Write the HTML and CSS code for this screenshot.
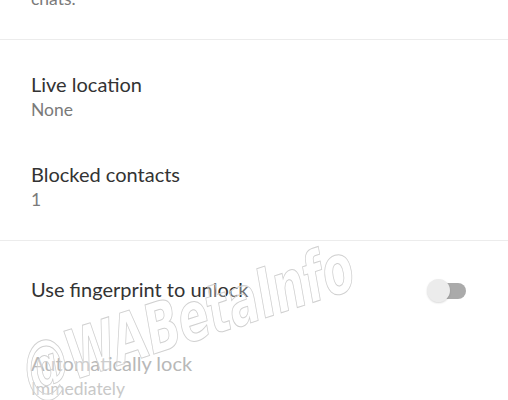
FILE: index.html
```html
<!DOCTYPE html>
<html lang="en">

<head>
    <meta charset="UTF-8">
    <meta name="viewport" content="width=device-width, initial-scale=1.0">
    <title>Privacy</title>
    <link rel="stylesheet" href="styles.css">
</head>

<body>
    <div class="intro">
        <p class="sub">chats.</p>
    </div>

    <div class="group">
        <div class="row">
            <div class="title">Live location</div>
            <div class="sub">None</div>
        </div>
        <div class="row">
            <div class="title">Blocked contacts</div>
            <div class="sub">1</div>
        </div>
    </div>

    <div class="group last">
        <div class="row single">
            <div class="title">Use fingerprint to unlock</div>
            <div class="toggle">
                <span class="track"></span>
                <span class="thumb"></span>
            </div>
        </div>
        <div class="row disabled">
            <div class="title">Automatically lock</div>
            <div class="sub">Immediately</div>
        </div>
    </div>

    <div class="watermark">@WABetaInfo</div>
</body>

</html>
```

FILE: styles.css
```css
body {
    margin: 0;
    padding: 0;
    background: #fff;
    font-family: Lato, "Noto Sans", sans-serif;
    overflow: hidden;
    position: relative;
    height: 400px;
}

.intro {
    height: 39px;
    overflow: hidden;
    border-bottom: 1px solid #ececec;
    padding-left: 31px;
}

.intro .sub {
    margin: -13px 0 0;
}

.group {
    padding: 12px 0 8px;
    border-bottom: 1px solid #ececec;
}

.group.last {
    padding-top: 8px;
    border-bottom: none;
}

.row {
    height: 90px;
    box-sizing: border-box;
    padding: 21px 42px 0 31px;
    display: flex;
    flex-direction: column;
}

.row.single {
    height: 82px;
    padding-top: 0;
    flex-direction: row;
    align-items: center;
    justify-content: space-between;
}

.title {
    font-size: 20px;
    line-height: 22px;
    color: #333;
}

.single .title {
    margin-top: -3px;
}

.sub {
    font-size: 17.5px;
    line-height: 24px;
    margin-top: 3px;
    color: #7a7a7a;
}

.disabled .title {
    color: #b8b8b8;
}

.disabled .sub {
    color: #c8c8c8;
}

.toggle {
    position: relative;
    width: 39px;
    height: 23px;
}

.track {
    position: absolute;
    right: 0;
    top: 4px;
    width: 34px;
    height: 16px;
    border-radius: 8px;
    background: #aaa;
}

.thumb {
    position: absolute;
    left: 0;
    top: 0;
    width: 23px;
    height: 23px;
    border-radius: 50%;
    background: #ececec;
    box-shadow: 0 1px 2px rgba(0, 0, 0, 0.15);
}

.watermark {
    position: absolute;
    left: 30px;
    top: 338px;
    font-family: "DejaVu Sans Condensed", "Liberation Sans Narrow", sans-serif;
    font-weight: bold;
    font-size: 68px;
    line-height: 1;
    color: rgba(255, 255, 255, 0.3);
    -webkit-text-stroke: 1px #d0d0d0;
    transform-origin: left bottom;
    transform: rotate(-18deg) skewX(-8deg) scaleX(0.74);
    pointer-events: none;
    white-space: nowrap;
}
```
